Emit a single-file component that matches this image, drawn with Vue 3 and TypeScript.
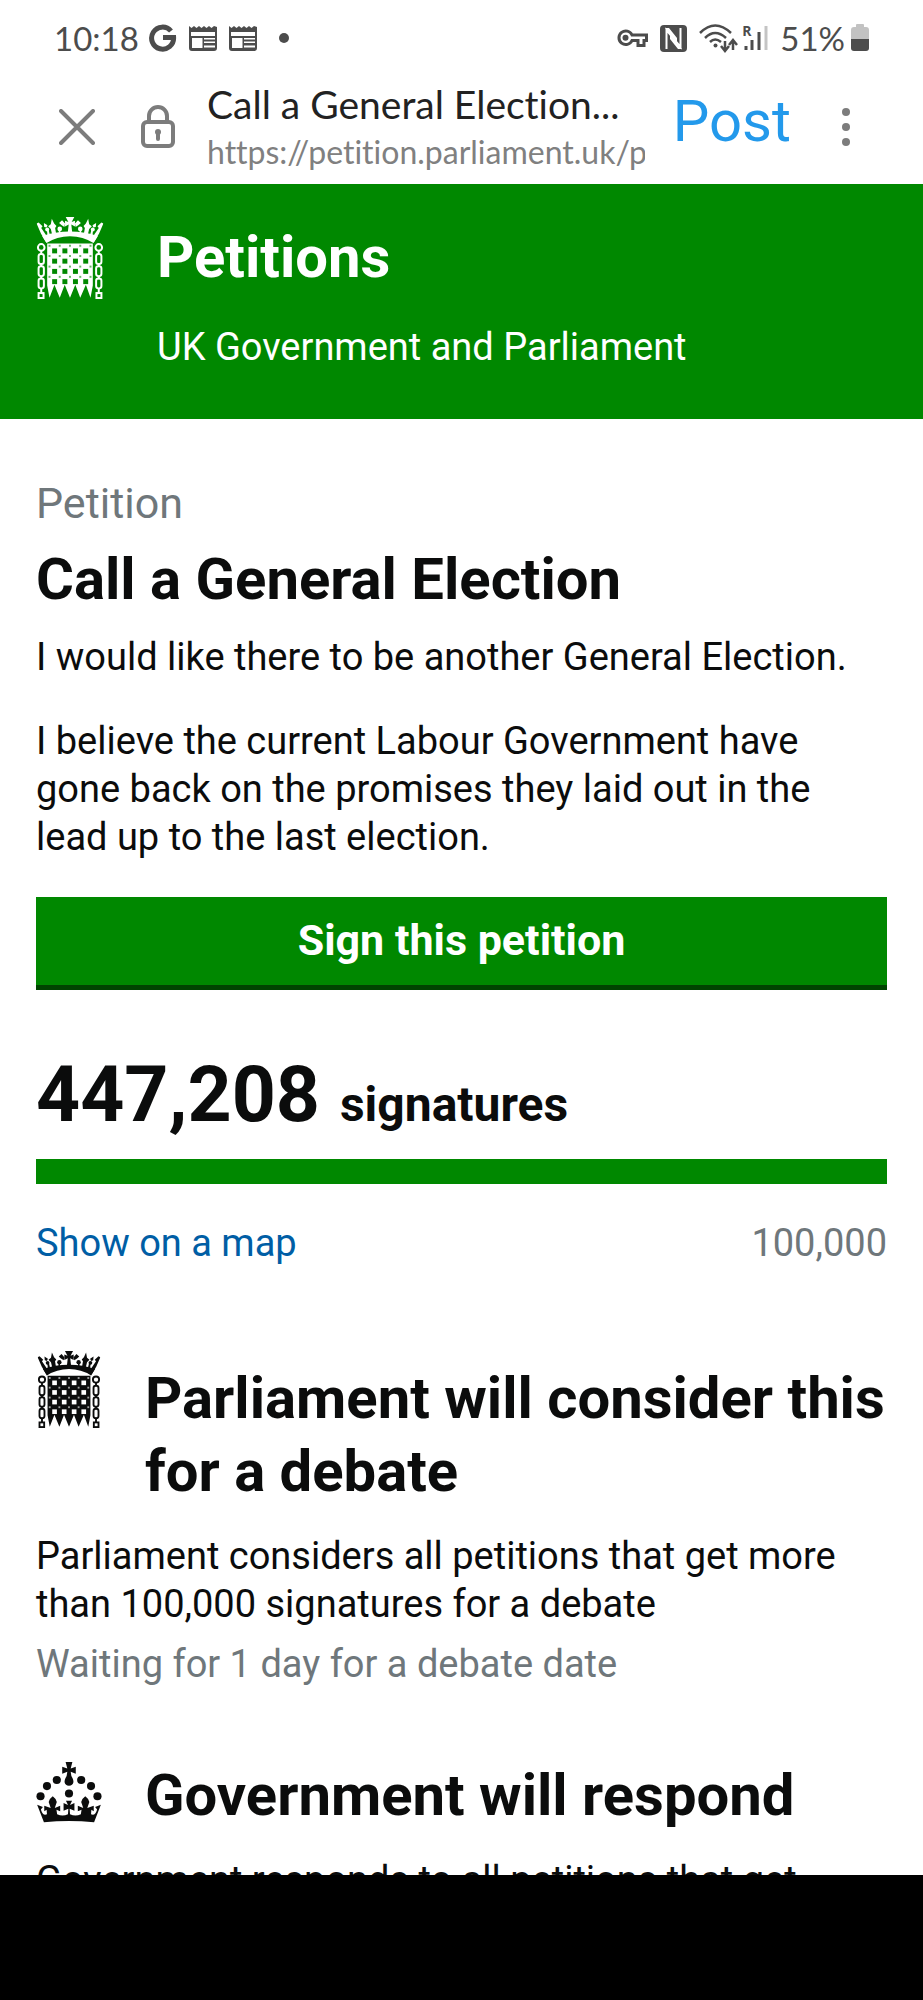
<script setup lang="ts">
import { ref } from 'vue'

const signatures = ref<number>(447208)
const threshold = ref<number>(100000)
const format = (n: number): string => n.toLocaleString('en-GB')

const gridColumns: number[] = [47, 78, 110, 141]
const gridRows: number[] = [95, 126, 157, 188]
const rivetColumns: number[] = [39, 70, 101, 132, 163]
const rivetRows: number[] = [87, 118, 150, 181]
</script>

<template>
  <div class="screen">
    <svg class="sprite" aria-hidden="true">
      <defs>
        <mask id="holes">
          <rect width="202" height="248" fill="#fff" />
          <template v-for="y in gridRows" :key="y">
            <rect v-for="x in gridColumns" :key="x" :x="x" :y="y" width="15" height="15" fill="#000" />
          </template>
          <template v-for="y in rivetRows" :key="'r' + y">
            <rect v-for="x in rivetColumns" :key="x" :x="x - 3" :y="y - 3" width="6" height="6" fill="#000" fill-opacity="0.6" />
          </template>
        </mask>
        <g id="half">
          <path d="M17 58 Q55 44 101 44 V58 Q61 58 30 79 Z" />
          <path d="M0 20 L6 17 L18 28 L14 33 L28 54 L30 79 L13 50 Z" />
          <path d="M46 5 L53 20 L60 27 L56 33 L59 51 L47 53 L43 36 L35 28 L43 22 Z" />
          <path d="M31 38 H36 L40 54 L33 56 Z M67 36 H72 V50 H67 Z" />
          <circle cx="32" cy="38" r="6" />
          <circle cx="70" cy="36" r="7" />
          <path d="M22 18 L33 25 L30 32 L23 30 Z M77 10 L86 20 L84 30 L75 24 L68 18 Z" />
          <path d="M88 0 H101 V50 H94 L97 23 L86 29 V11 L96 15 Z" />
          <g fill="none" stroke="currentColor" stroke-width="6">
            <circle cx="14" cy="92" r="10" />
            <rect x="6" y="112" width="16" height="30" rx="7" />
            <rect x="6" y="149" width="16" height="30" rx="7" />
            <rect x="6" y="186" width="16" height="30" rx="7" />
            <rect x="6" y="230" width="15" height="15" />
            <path d="M14 101 V113 M14 141 V151 M14 178 V188 M14 215 V231" />
          </g>
        </g>
        <symbol id="portcullis" viewBox="0 0 202 248">
          <g mask="url(#holes)" fill="currentColor">
            <use href="#half" />
            <use href="#half" transform="matrix(-1 0 0 1 202 0)" />
            <path d="M32 80 H170 V207 L163 244 L149 205 L132 244 L117 205 L101 244 L85 205 L70 244 L54 205 L39 244 L32 207 Z" />
          </g>
        </symbol>
      </defs>
    </svg>

    <div class="status">
      <div class="group left">
        <time class="clock">10:18</time>
        <svg width="28" height="28" viewBox="0 0 28 28" aria-hidden="true">
          <path d="M22 7 A11 11 0 1 0 24.6 13.5 H14" fill="none" stroke="#4c4c4c" stroke-width="5" />
        </svg>
        <svg v-for="n in 2" :key="n" class="news" width="28" height="26" viewBox="0 0 28 26" aria-hidden="true">
          <path d="M0 1 L2.5 3 L5 1 L7.5 3 L10 1 L12.5 3 L15 1 L17.500 3 L20 1 L22.500 3 L25 1 L28 2 V23 Q28 26 25 26 H3 Q0 26 0 23 Z" fill="#4c4c4c" />
          <path d="M2 7 H26 V11 H2 Z M3 13 H13.500 V23 H3 Z M15 13 H26 V14.500 H15 Z M15 16.500 H26 V18 H15 Z M15 20.500 H26 V22.500 H15 Z" fill="#fff" />
        </svg>
        <i class="more-dot"></i>
      </div>
      <div class="group right">
        <svg width="31" height="20" viewBox="0 0 31 20" aria-hidden="true">
          <path d="M15 7 H29.500 V12.500 H27 V17.500 H21 V12.500 H15 A6.800 6.800 0 1 1 15 7 Z" fill="none" stroke="#4c4c4c" stroke-width="3" />
          <circle cx="8.500" cy="9.800" r="3" fill="#4c4c4c" />
        </svg>
        <svg width="27" height="27" viewBox="0 0 27 27" aria-hidden="true">
          <rect width="27" height="27" rx="4" fill="#4c4c4c" />
          <path d="M6.500 24 V5 L20.500 22 V3" fill="none" stroke="#fff" stroke-width="2" />
          <path d="M5 3 H9 L17 13 V17 L7 5 Z M22 24 H18 L10 14 V10 L20 22 Z" fill="#fff" />
        </svg>
        <svg width="39" height="29" viewBox="0 0 39 29" aria-hidden="true">
          <g fill="none" stroke="#4c4c4c" stroke-width="2.500">
            <path d="M1 9 Q16 -6 32 9 M6 14 Q16 4 27 14 M11 18 Q16 13 22 18" />
            <path d="M26 17 V27 M22 22 L26 27 L30 22 M34 26 V16 M30 21 L34 16 L38 21" />
          </g>
          <circle cx="16.500" cy="21.500" r="2" fill="#4c4c4c" />
        </svg>
        <div class="signal">
          <span class="roaming">R</span>
          <svg width="26" height="26" viewBox="0 0 26 26" aria-hidden="true">
            <path d="M4 21 V25 M10 15 V25 M17 7 V25" stroke="#4c4c4c" stroke-width="3" />
            <path d="M24 1 V25" stroke="#c4c4c4" stroke-width="3" />
          </svg>
        </div>
        <span class="battery-text">51%</span>
        <svg width="18" height="28" viewBox="0 0 18 28" aria-hidden="true">
          <path d="M5 3 V1 Q5 0 6 0 H12 Q13 0 13 1 V3 H15 Q18 3 18 6 V16 H0 V6 Q0 3 3 3 Z" fill="#c2c2c2" />
          <path d="M0 15 H18 V24 Q18 27 15 27 H3 Q0 27 0 24 Z" fill="#4c4c4c" />
        </svg>
      </div>
    </div>

    <div class="browser">
      <button class="icon-button close" type="button" aria-label="Close">
        <svg width="36" height="36" viewBox="0 0 36 36"><path d="M2 2 L34 34 M34 2 L2 34" stroke="#7c7c7c" stroke-width="4" stroke-linecap="round" /></svg>
      </button>
      <svg class="lock" width="34" height="43" viewBox="0 0 34 43" aria-hidden="true">
        <g fill="none" stroke="#7c7c7c" stroke-width="4">
          <rect x="2" y="17" width="30" height="24" rx="4" />
          <path d="M8 17 V11 A9 9 0 0 1 26 11 V17" />
        </g>
        <circle cx="17" cy="27" r="3" fill="#7c7c7c" />
        <path d="M17 27 V34" stroke="#7c7c7c" stroke-width="4" stroke-linecap="round" />
      </svg>
      <div class="address">
        <div class="page-title">Call a General Election...</div>
        <div class="url">https://petition.parliament.uk/p</div>
      </div>
      <button class="post" type="button">Post</button>
      <button class="icon-button menu" type="button" aria-label="More options">
        <svg width="8" height="38" viewBox="0 0 8 38" fill="#7c7c7c"><circle cx="4" cy="4" r="4" /><circle cx="4" cy="19" r="4" /><circle cx="4" cy="34" r="4" /></svg>
      </button>
    </div>

    <div class="viewport">
      <header class="banner">
        <svg class="banner-logo" aria-hidden="true"><use href="#portcullis" /></svg>
        <div>
          <div class="heading">Petitions</div>
          <div class="tagline">UK Government and Parliament</div>
        </div>
      </header>

      <main>
        <div class="kicker">Petition</div>
        <h1 class="heading">Call a General Election</h1>
        <p class="lead">I would like there to be another General Election.</p>
        <p>I believe the current Labour Government have gone back on the promises they laid out in the lead up to the last election.</p>
        <button class="sign" type="button">Sign this petition</button>

        <div class="count"><span class="number">{{ format(signatures) }}</span> signatures</div>
        <div class="bar"></div>
        <div class="totals">
          <a href="#map">Show on a map</a>
          <span class="muted">{{ format(threshold) }}</span>
        </div>

        <section class="debate">
          <div class="section-head">
            <svg class="section-logo" aria-hidden="true"><use href="#portcullis" /></svg>
            <h2 class="heading">Parliament will consider this for a debate</h2>
          </div>
          <p>Parliament considers all petitions that get more than 100,000 signatures for a debate</p>
          <p class="muted waiting">Waiting for 1 day for a debate date</p>
        </section>

        <section class="response">
          <div class="section-head">
            <svg class="crown" viewBox="0 0 190 180" aria-hidden="true">
              <circle cx="11" cy="101" r="12" /><circle cx="30" cy="71" r="12" /><circle cx="59" cy="53" r="12" />
              <circle cx="131" cy="53" r="12" /><circle cx="160" cy="71" r="12" /><circle cx="179" cy="101" r="12" />
              <circle cx="95" cy="93" r="12" />
              <path d="M85 0 H105 L100 19 L115 14 V35 L100 29 L102 41 Q109 52 108 60 Q106 70 95 70 Q84 70 82 60 Q81 52 88 41 L90 29 L75 35 V14 L90 19 Z" />
              <path d="M1 126 L18 133 L12 140 Q18 160 30 154 L29 141 L22 145 V129 L41 136 L35 118 Q37 108 47 101 Q57 108 59 118 L53 136 L69 129 V145 L58 141 L60 154 Q76 162 92 154 L93 138 L79 144 V121 L92 127 L86 114 H104 L98 127 L111 121 V144 L97 138 L98 154 Q114 162 130 154 L132 141 L121 145 V129 L137 136 L131 118 Q133 108 143 101 Q153 108 155 118 L149 136 L168 129 V145 L161 141 L160 154 Q172 160 178 140 L172 133 L189 126 L169 178 Q95 170 21 178 Z" />
            </svg>
            <h2 class="heading">Government will respond</h2>
          </div>
          <p>Government responds to all petitions that get more than 10,000 signatures</p>
        </section>
      </main>
    </div>

    <div class="system-nav"></div>
  </div>
</template>

<style>
body {
  margin: 0;
  background: #fff;
}
</style>

<style scoped>
.screen {
  display: flex;
  flex-direction: column;
  height: 100vh;
  overflow: hidden;
  color: #0b0c0c;
  background: #fff;
  font-family: Roboto, "Liberation Sans", sans-serif;
  font-size: 38px;
  line-height: 48px;
}
.sprite {
  position: absolute;
  width: 0;
  height: 0;
}
svg {
  display: block;
  flex: none;
}
button {
  font: inherit;
  border: 0;
  padding: 0;
  background: none;
}
p,
h1,
h2 {
  margin: 0;
}
.status,
.browser,
.system-nav,
.banner {
  flex: none;
}
.status {
  display: flex;
  justify-content: space-between;
  padding: 14px 54px 0;
  color: #4c4c4c;
  font-family: Lato, "Open Sans", sans-serif;
  font-size: 33px;
}
.group {
  display: flex;
  align-items: center;
  height: 48px;
}
.left {
  gap: 12px;
}
.clock {
  margin-right: -2px;
}
.more-dot {
  width: 10px;
  height: 10px;
  margin-left: 10px;
  border-radius: 50%;
  background: #4c4c4c;
}
.right {
  gap: 12px;
}
.signal {
  position: relative;
  margin-left: -8px;
}
.roaming {
  position: absolute;
  left: 0;
  top: -2px;
  font: 700 14px/16px "Open Sans", sans-serif;
}
.battery-text {
  margin: 0 -6px 0 0;
}
.browser {
  display: flex;
  align-items: center;
  height: 122px;
  padding: 0 73px 0 59px;
}
.lock {
  margin: 6px 32px 0 46px;
}
.close,
.menu {
  padding-top: 8px;
}
.address {
  flex: 1;
  min-width: 0;
  padding-top: 10px;
  font-family: Lato, "Open Sans", sans-serif;
  font-variant-ligatures: none;
  white-space: nowrap;
}
.page-title {
  color: #222;
  font-size: 39px;
}
.url {
  overflow: hidden;
  color: #808080;
  font-size: 32px;
}
.post {
  margin: 0 51px 0 28px;
  padding-bottom: 4px;
  color: #2399eb;
  font-size: 58px;
  line-height: 72px;
}
.viewport {
  flex: 1;
  min-height: 0;
  overflow: hidden;
}
.heading {
  font-size: 58px;
  line-height: 73px;
  font-weight: 700;
}
.banner {
  display: flex;
  gap: 53px;
  padding: 37px 36px 48px;
  color: #fff;
  background: #008800;
}
.banner-logo {
  width: 68px;
  height: 82px;
  margin-top: -4px;
}
.tagline {
  margin-top: 29px;
}
main {
  padding: 54px 36px 0;
}
.kicker {
  margin-bottom: 10px;
  color: #6f777b;
  font-size: 43px;
  line-height: 60px;
}
.lead {
  margin: 17px 0 36px;
}
.sign {
  display: block;
  width: 100%;
  margin-top: 36px;
  padding: 13px 0 15px;
  border-bottom: 5px solid #004400;
  color: #fff;
  background: #008800;
  font-size: 43px;
  line-height: 60px;
  font-weight: 700;
}
.count {
  margin-top: 60px;
  font-size: 48px;
  line-height: 90px;
  font-weight: 700;
}
.number {
  margin-right: 8px;
  font-size: 77px;
}
.bar {
  height: 25px;
  margin: 9px 0 35px;
  background: #008800;
}
.totals {
  display: flex;
  justify-content: space-between;
}
.totals a {
  color: #005ea5;
  text-decoration: none;
}
.muted {
  color: #6f777b;
}
.debate {
  margin-top: 84px;
}
.section-head {
  display: flex;
  align-items: flex-start;
}
.section-head .heading {
  flex: 1;
  margin: 11px 0 24px 43px;
}
.section-logo {
  width: 66px;
  height: 77px;
}
.waiting {
  margin-top: 12px;
}
.response {
  margin-top: 60px;
}
.crown {
  width: 66px;
  height: 61px;
  margin-top: 14px;
  fill: #0b0c0c;
}
.system-nav {
  height: 125px;
  background: #000;
}
</style>
